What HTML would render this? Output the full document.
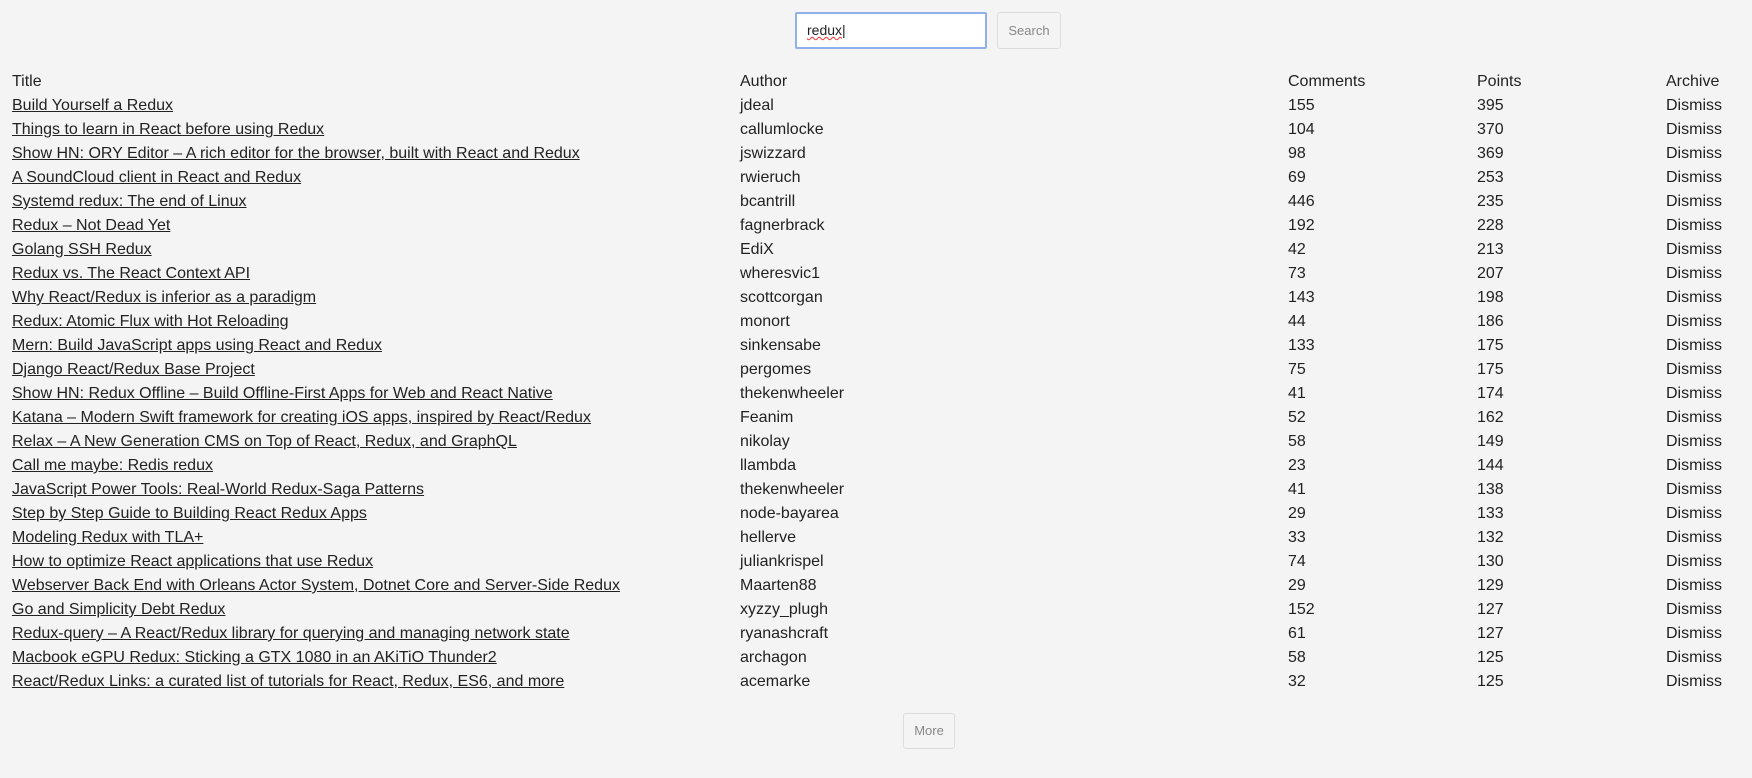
<!DOCTYPE html>
<html><head><meta charset="utf-8"><style>
html,body{margin:0;padding:0;background:#f4f4f4;width:1752px;height:778px;overflow:hidden;font-family:"Liberation Sans",Arial,sans-serif;color:#222;font-size:16px}
.search{position:absolute;top:12px;left:795px;height:36px}
.search .in{position:absolute;left:0;top:0;border:2px solid #8fb0ea;border-radius:2px;background:#fff;box-sizing:border-box;width:192px;height:37px;font-size:14px;line-height:33px;padding-left:10px}
.search .in span{text-decoration:underline wavy #e33;text-decoration-thickness:1px}
.btn{position:absolute;border:1px solid #ddd;border-radius:3px;box-sizing:border-box;color:#888;font-size:13px;text-align:center;background:#f4f4f4}
.search .btn{left:202px;top:0;width:64px;height:37px;line-height:35px}
.row{position:absolute;left:12px;height:24px;line-height:24px;white-space:nowrap}
.row div{position:absolute;top:0}
.c1{left:0}.c2{left:728px}.c3{left:1276px}.c4{left:1465px}.c5{left:1654px}
a{color:#222;text-decoration:underline}
</style></head><body>
<div class="search"><div class="in"><span>redux</span>|</div><div class="btn">Search</div></div>
<div id="t"></div>
<div class="btn" style="left:903px;top:713px;width:52px;height:36px;line-height:34px">More</div>
<script>
var d=[["Title","Author","Comments","Points","Archive"],
["Build Yourself a Redux","jdeal",155,395],
["Things to learn in React before using Redux","callumlocke",104,370],
["Show HN: ORY Editor – A rich editor for the browser, built with React and Redux","jswizzard",98,369],
["A SoundCloud client in React and Redux","rwieruch",69,253],
["Systemd redux: The end of Linux","bcantrill",446,235],
["Redux – Not Dead Yet","fagnerbrack",192,228],
["Golang SSH Redux","EdiX",42,213],
["Redux vs. The React Context API","wheresvic1",73,207],
["Why React/Redux is inferior as a paradigm","scottcorgan",143,198],
["Redux: Atomic Flux with Hot Reloading","monort",44,186],
["Mern: Build JavaScript apps using React and Redux","sinkensabe",133,175],
["Django React/Redux Base Project","pergomes",75,175],
["Show HN: Redux Offline – Build Offline-First Apps for Web and React Native","thekenwheeler",41,174],
["Katana – Modern Swift framework for creating iOS apps, inspired by React/Redux","Feanim",52,162],
["Relax – A New Generation CMS on Top of React, Redux, and GraphQL","nikolay",58,149],
["Call me maybe: Redis redux","llambda",23,144],
["JavaScript Power Tools: Real-World Redux-Saga Patterns","thekenwheeler",41,138],
["Step by Step Guide to Building React Redux Apps","node-bayarea",29,133],
["Modeling Redux with TLA+","hellerve",33,132],
["How to optimize React applications that use Redux","juliankrispel",74,130],
["Webserver Back End with Orleans Actor System, Dotnet Core and Server-Side Redux","Maarten88",29,129],
["Go and Simplicity Debt Redux","xyzzy_plugh",152,127],
["Redux-query – A React/Redux library for querying and managing network state","ryanashcraft",61,127],
["Macbook eGPU Redux: Sticking a GTX 1080 in an AKiTiO Thunder2","archagon",58,125],
["React/Redux Links: a curated list of tutorials for React, Redux, ES6, and more","acemarke",32,125]];
var h="";d.forEach(function(r,i){var top=70+i*24;
h+='<div class="row" style="top:'+top+'px"><div class="c1">'+(i?'<a>'+r[0]+'</a>':r[0])+'</div><div class="c2">'+r[1]+'</div><div class="c3">'+r[2]+'</div><div class="c4">'+r[3]+'</div><div class="c5">'+(i?'Dismiss':r[4])+'</div></div>';});
document.getElementById("t").innerHTML=h;
</script>
</body></html>
